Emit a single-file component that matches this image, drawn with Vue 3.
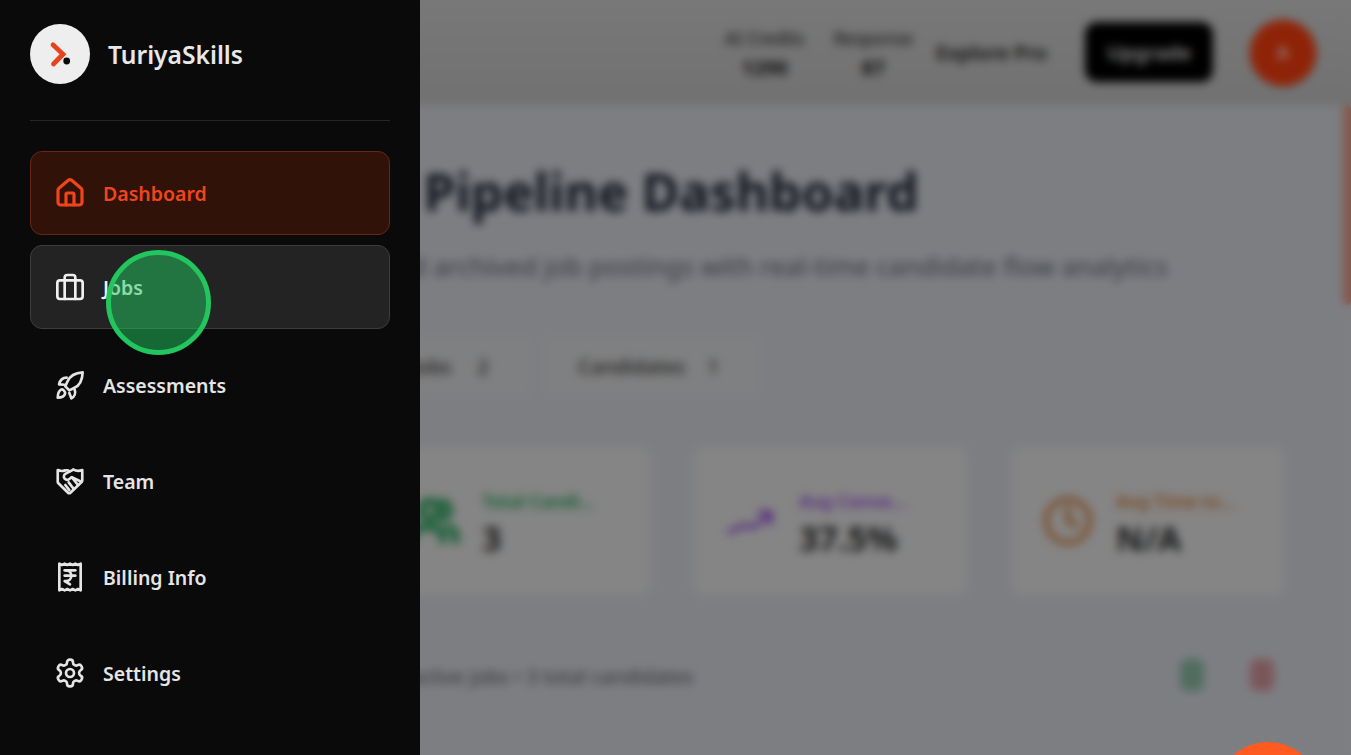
<script setup>
const navItems = [
  { label: "Dashboard", icon: "house", active: true },
  { label: "Jobs", icon: "briefcase", hover: true },
  { label: "Assessments", icon: "rocket" },
  { label: "Team", icon: "handshake" },
  { label: "Billing Info", icon: "receipt" },
  { label: "Settings", icon: "settings" },
];

const stats = [
  { label: "Total Candi...", value: "3", tone: "green" },
  { label: "Avg Conve...", value: "37.5%", tone: "purple" },
  { label: "Avg Time to...", value: "N/A", tone: "orange" },
];
</script>

<template>
  <div class="page">
    <!-- Page behind the drawer -->
    <div class="content">
      <header class="topbar">
        <div class="credit">
          <span>AI Credits</span>
          <b>1290</b>
        </div>
        <div class="credit">
          <span>Response</span>
          <b>87</b>
        </div>
        <span class="explore">Explore Pro</span>
        <button class="upgrade">Upgrade</button>
        <div class="avatar">A</div>
      </header>

      <div class="body">
        <main class="main">
          <h1 class="title">Jobs Pipeline Dashboard</h1>
          <p class="subtitle">
            Active and archived job postings with real-time candidate flow analytics
          </p>

          <div class="tabs">
            <div class="tab">Active Jobs <span>2</span></div>
            <div class="tab tab--on">Candidates <span>1</span></div>
          </div>

          <div class="stats">
            <div v-for="stat in stats" :key="stat.label" class="stat">
              <svg class="stat-icon" :class="stat.tone" viewBox="0 0 24 24" fill="none" stroke="currentColor" stroke-linecap="round" stroke-linejoin="round">
                <template v-if="stat.tone === 'green'">
                  <g stroke-width="3.2">
                    <path d="M16 21v-2a4 4 0 0 0-4-4H6a4 4 0 0 0-4 4v2" />
                    <circle cx="10" cy="7" r="4" />
                    <path d="M22 21v-2a4 4 0 0 0-3-3.870" />
                    <path d="M16 3.130a4 4 0 0 1 0 7.750" />
                  </g>
                </template>
                <template v-else-if="stat.tone === 'purple'">
                  <g stroke-width="2">
                    <path d="M2 17l7-3 4 1 8-6" />
                    <path d="M16 8h5v5" />
                  </g>
                </template>
                <template v-else>
                  <g stroke-width="2.200">
                    <circle cx="12" cy="12" r="10" />
                    <path d="M12 6v6l4 2" />
                  </g>
                </template>
              </svg>
              <div class="stat-text">
                <div class="stat-label" :class="stat.tone">{{ stat.label }}</div>
                <div class="stat-value">{{ stat.value }}</div>
              </div>
            </div>
          </div>

          <div class="summary">
            <span class="summary-text">2 active jobs • 3 total candidates</span>
            <div class="summary-actions">
              <span class="dot dot--green"></span>
              <span class="dot dot--red"></span>
            </div>
          </div>
        </main>
        <div class="scrollbar"><div class="thumb"></div></div>
      </div>
    </div>

    <div class="overlay"></div>

    <!-- The avatar reads brighter than the dimmed page -->
    <div class="avatar-glow"></div>

    <div class="fab"></div>

    <!-- Drawer -->
    <aside class="drawer">
      <div class="brand">
        <div class="logo">
          <svg width="60" height="60" viewBox="0 0 60 60">
            <path d="M23 20.800 L33 30.300 L23.500 40" fill="none" stroke="#e8431f" stroke-width="4.800" stroke-linecap="round" stroke-linejoin="miter" />
            <circle cx="36.700" cy="37" r="3.400" fill="#0a0a0a" />
          </svg>
        </div>
        <span class="brand-name">TuriyaSkills</span>
      </div>

      <nav class="nav">
        <a
          v-for="item in navItems"
          :key="item.label"
          class="nav-item"
          :class="{ 'nav-item--active': item.active, 'nav-item--hover': item.hover }"
        >
          <svg class="nav-icon" viewBox="0 0 24 24" fill="none" stroke="currentColor" stroke-width="2" stroke-linecap="round" stroke-linejoin="round">
            <template v-if="item.icon === 'house'">
              <path d="M15 21v-8a1 1 0 0 0-1-1h-4a1 1 0 0 0-1 1v8" />
              <path d="M3 10a2 2 0 0 1 .709-1.528l7-5.999a2 2 0 0 1 2.582 0l7 5.999A2 2 0 0 1 21 10v9a2 2 0 0 1-2 2H5a2 2 0 0 1-2-2z" />
            </template>
            <template v-else-if="item.icon === 'briefcase'">
              <rect x="2.500" y="7" width="19" height="14" rx="2" />
              <path d="M16 21V5a2 2 0 0 0-2-2h-4a2 2 0 0 0-2 2v16" />
            </template>
            <template v-else-if="item.icon === 'rocket'">
              <path d="M21.500 2.500C16 2.800 12 5 10 9.500L8.500 13l3 3 3.500-1.700C19.300 12.500 21.300 8 21.500 2.500Z" />
              <path d="M9.500 6.500C6.800 6.500 4.500 8.300 3.800 11.500L7.800 11.800" />
              <path d="M5.300 15.500C3.500 16.500 2.800 18.800 2.800 21.500 5.500 21.500 7.800 20.500 8.300 18.500 8.600 17 6.800 14.800 5.300 15.500Z" />
              <path d="M15.500 15.500C16.500 18 15.500 20.700 13 22L11.500 18" />
            </template>
            <template v-else-if="item.icon === 'handshake'">
              <path d="M8 4.200C6 4.800 4.500 4.600 2.800 3.800V12.500C2.800 13 3 13.400 3.300 13.700L10.500 20.800C11 21.300 11.800 21.300 12.300 20.800L20.700 12.800C21 12.500 21.200 12 21.200 11.500V3.800C18.500 4.800 16.500 4.500 14.500 3.500" />
              <path d="M14.500 3.500 8.800 6.500C7.300 7.300 7 9 8 10.200 9 11.300 10.500 11.300 11.500 10.500L13.300 9.200 20.500 12.500" />
              <path d="M8 4.200C9.500 3.700 10.500 3.700 11.800 4.800" />
              <path d="M13.300 9.200 18 15M11 13 14.800 18M8.500 15 11.500 18.800" />
            </template>
            <template v-else-if="item.icon === 'receipt'">
              <path d="M4 2v20l2-1 2 1 2-1 2 1 2-1 2 1 2-1 2 1V2l-2 1-2-1-2 1-2-1-2 1-2-1-2 1Z" />
              <path d="M8 7h8" />
              <path d="M12 17.500 8 15h1a4 4 0 0 0 0-8" />
              <path d="M8 11h8" />
            </template>
            <template v-else>
              <path d="M12.220 2h-.44a2 2 0 0 0-2 2v.18a2 2 0 0 1-1 1.730l-.43.25a2 2 0 0 1-2 0l-.15-.08a2 2 0 0 0-2.730.73l-.22.38a2 2 0 0 0 .73 2.730l.15.1a2 2 0 0 1 1 1.720v.51a2 2 0 0 1-1 1.740l-.15.09a2 2 0 0 0-.73 2.730l.22.38a2 2 0 0 0 2.730.73l.15-.08a2 2 0 0 1 2 0l.43.25a2 2 0 0 1 1 1.730V20a2 2 0 0 0 2 2h.44a2 2 0 0 0 2-2v-.18a2 2 0 0 1 1-1.730l.43-.25a2 2 0 0 1 2 0l.15.08a2 2 0 0 0 2.730-.73l.22-.39a2 2 0 0 0-.73-2.730l-.15-.08a2 2 0 0 1-1-1.740v-.5a2 2 0 0 1 1-1.740l.15-.09a2 2 0 0 0 .73-2.730l-.22-.38a2 2 0 0 0-2.730-.73l-.15.08a2 2 0 0 1-2 0l-.43-.25a2 2 0 0 1-1-1.730V4a2 2 0 0 0-2-2z" />
              <circle cx="12" cy="12" r="3" />
            </template>
          </svg>
          <span>{{ item.label }}</span>
        </a>
      </nav>
    </aside>

    <!-- Click marker from the recording -->
    <div class="click-marker"></div>
  </div>
</template>

<style scoped>
.page {
  position: relative;
  width: 1351px;
  height: 755px;
  overflow: hidden;
  font-family: "Noto Sans", sans-serif;
}

.content {
  display: flex;
  flex-direction: column;
  height: 100%;
  background: #f0f2fa;
}

.topbar {
  flex: 0 0 105px;
  display: flex;
  align-items: center;
  justify-content: flex-end;
  padding: 0 35px 0 0;
  background: linear-gradient(#e6e6e6, #d9d9d9);
  color: #222;
}

.credit {
  display: flex;
  flex-direction: column;
  align-items: center;
  margin-right: 23px;
  font-size: 17.500px;
  line-height: 30px;
}

.credit:first-child {
  margin-right: 29px;
}

.credit b {
  font-size: 20px;
}

.explore {
  margin: 0 38px 0 0;
  font-size: 20px;
  font-weight: 600;
}

.upgrade {
  width: 128px;
  height: 60px;
  margin-right: 37px;
  margin-top: -1px;
  border: none;
  border-radius: 12px;
  background: #000;
  color: #fff;
  font-family: inherit;
  font-size: 20px;
  font-weight: 600;
}

.avatar {
  width: 66px;
  height: 66px;
  border-radius: 50%;
  display: flex;
  align-items: center;
  justify-content: center;
  background: #f4410f;
  color: #fff;
  font-size: 17px;
  font-weight: 700;
}

.avatar-glow {
  position: absolute;
  left: 1250px;
  top: 19px;
  width: 66px;
  height: 66px;
  border-radius: 50%;
  background: rgba(255, 50, 10, 0.12);
  filter: blur(3px);
}

.body {
  flex: 1;
  display: flex;
  min-height: 0;
}

.main {
  flex: 1;
  padding: 53px 59px 0 300px;
}

.title {
  margin: 0 0 0 3px;
  font-size: 51.300px;
  line-height: 66px;
  font-weight: 700;
  color: #1f2937;
  white-space: nowrap;
}

.subtitle {
  margin: 25px 0 0;
  font-size: 26px;
  line-height: 34px;
  color: #6b7280;
  white-space: nowrap;
}

.tabs {
  display: flex;
  gap: 14px;
  margin-top: 52px;
  height: 62px;
}

.tab {
  width: 231px;
  padding-left: 48px;
  display: flex;
  align-items: center;
  gap: 26px;
  font-size: 20px;
  font-weight: 500;
  color: #444;
  box-sizing: border-box;
  white-space: nowrap;
  background: #f4f5f7;
  border-radius: 10px;
}

.tab--on {
  width: 215px;
  padding-left: 33px;
  gap: 22px;
}

.stats {
  display: flex;
  justify-content: flex-end;
  gap: 44px;
  margin-top: 50px;
}

.stat {
  flex: 0 0 273px;
  box-sizing: border-box;
  height: 148px;
  padding-left: 31px;
  display: flex;
  align-items: center;
  gap: 22px;
  background: #fff;
  border-radius: 10px;
}

.stat-icon {
  flex: 0 0 52px;
  height: 52px;
}

.stat-text {
  padding-top: 6px;
}

.stat-label {
  font-size: 18px;
  font-weight: 600;
  line-height: 28px;
}

.stat-value {
  font-size: 34px;
  font-weight: 700;
  line-height: 46px;
  color: #333;
}

.green { color: #22b35e; }
.purple { color: #a855f7; }
.orange { color: #ea8a3c; }

.summary {
  display: flex;
  align-items: center;
  justify-content: space-between;
  margin-top: 64px;
  font-size: 20px;
  color: #666;
}

.summary-text {
  margin: 2px 0 0 93px;
}

.summary-actions {
  display: flex;
  gap: 46px;
  padding-right: 10px;
}

.dot {
  width: 24px;
  height: 32px;
  border-radius: 8px;
}

.dot--green { background: #22a559; opacity: 0.42; }
.dot--red { background: #e23c3c; opacity: 0.42; }

.scrollbar {
  flex: 0 0 8px;
}

.thumb {
  height: 200px;
  background: #ffa98f;
  border-radius: 4px;
}

.overlay {
  position: absolute;
  inset: 0;
  background: rgba(0, 0, 0, 0.48);
  backdrop-filter: blur(5px);
}

.fab {
  position: absolute;
  left: 1216px;
  top: 742px;
  width: 104px;
  height: 104px;
  border-radius: 50%;
  background: #ff5a1f;
}

.drawer {
  position: absolute;
  left: 0;
  top: 0;
  bottom: 0;
  width: 420px;
  box-sizing: border-box;
  padding: 24px 30px;
  background: #0a0a0a;
  color: #e5e5e5;
}

.brand {
  display: flex;
  align-items: center;
  gap: 18px;
  padding-bottom: 36px;
  border-bottom: 1px solid #262626;
}

.logo {
  width: 60px;
  height: 60px;
  border-radius: 50%;
  background: #eeeeee;
}

.logo svg {
  display: block;
}

.brand-name {
  font-size: 24.600px;
  font-weight: 600;
  color: #e8e8e8;
}

.nav {
  display: flex;
  flex-direction: column;
  gap: 12px;
  margin-top: 30px;
}

.nav-item {
  box-sizing: border-box;
  height: 84px;
  display: flex;
  align-items: center;
  gap: 17px;
  padding: 0 23px;
  border: 1px solid transparent;
  border-radius: 12px;
  font-size: 19.500px;
  font-weight: 600;
}

.nav-icon {
  flex: 0 0 32px;
  width: 32px;
  height: 32px;
}

.nav-item--active {
  background: #311209;
  border-color: #6b2612;
  color: #f0451a;
}

.nav-item--active .nav-icon {
  stroke-width: 2.400;
}

.nav-item--hover {
  background: #232323;
  border-color: #3d3d3d;
  color: #f0f0f0;
  transform: translateY(-2px);
}

.click-marker {
  position: absolute;
  left: 106px;
  top: 250px;
  width: 105px;
  height: 105px;
  box-sizing: border-box;
  border: 5px solid #22c55e;
  border-radius: 50%;
  background: rgba(34, 197, 94, 0.5);
}
</style>
